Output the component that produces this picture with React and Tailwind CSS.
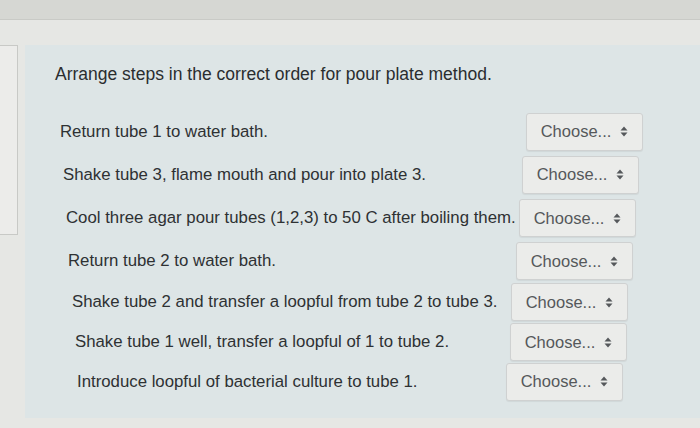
const steps = [
  { text: "Return tube 1 to water bath.", row: "pl-[60px] pr-[57px] h-[43px]" },
  { text: "Shake tube 3, flame mouth and pour into plate 3.", row: "pl-[63px] pr-[61px] h-[43px]" },
  { text: "Cool three agar pour tubes (1,2,3) to 50 C after boiling them.", row: "pl-[66px] pr-[64px] h-[44px]" },
  { text: "Return tube 2 to water bath.", row: "pl-[68px] pr-[67px] h-[42px]" },
  { text: "Shake tube 2 and transfer a loopful from tube 2 to tube 3.", row: "pl-[72px] pr-[72px] h-[40px]" },
  { text: "Shake tube 1 well, transfer a loopful of 1 to tube 2.", row: "pl-[75px] pr-[73px] h-[40px]" },
  { text: "Introduce loopful of bacterial culture to tube 1.", row: "pl-[77px] pr-[77px] h-[39px]" },
];

function UpDown() {
  return (
    <svg width="8" height="11" viewBox="0 0 8 11" className="ml-[9px]">
      <path d="M4 0.5 L7.5 4.5 L0.5 4.5 Z" fill="#55585b" />
      <path d="M4 10.5 L7.5 6.5 L0.5 6.5 Z" fill="#55585b" />
    </svg>
  );
}

export default function App() {
  return (
    <div
      className="w-[700px] h-[428px] overflow-hidden bg-[#e6e7e4] flex flex-col"
      style={{ fontFamily: '"Liberation Sans", Arial, sans-serif' }}
    >
      {/* top strip */}
      <div className="h-[20px] bg-[#d6d7d3] border-b border-[#c9cac6] shrink-0" />

      <div className="flex flex-1 pt-[25px] pb-[10px]">
        {/* left sidebar edge */}
        <div className="w-[18px] h-[190px] bg-[#ececea] border border-l-0 border-[#c8c9c6] shrink-0" />

        {/* question panel */}
        <div className="ml-[7px] flex-1 bg-[#dde5e6] flex flex-col">
          <p className="pl-[30px] pt-[18px] text-[17.5px] text-[#2a2d2f] leading-[22px]">
            Arrange steps in the correct order for pour plate method.
          </p>

          <div className="mt-[25px] flex flex-col">
            {steps.map((s) => (
              <div key={s.text} className={`flex items-center justify-between -ml-[25px] ${s.row}`}>
                <span className="text-[16.8px] text-[#2e3133]">{s.text}</span>
                <div className="w-[117px] h-[38px] shrink-0 flex items-center justify-center rounded-[3px] border border-[#cfd1d1] bg-[#ebecea] shadow-[0_1px_1px_rgba(0,0,0,0.06)]">
                  <span className="text-[16.5px] text-[#55585b]">Choose...</span>
                  <UpDown />
                </div>
              </div>
            ))}
          </div>
        </div>
      </div>
    </div>
  );
}
